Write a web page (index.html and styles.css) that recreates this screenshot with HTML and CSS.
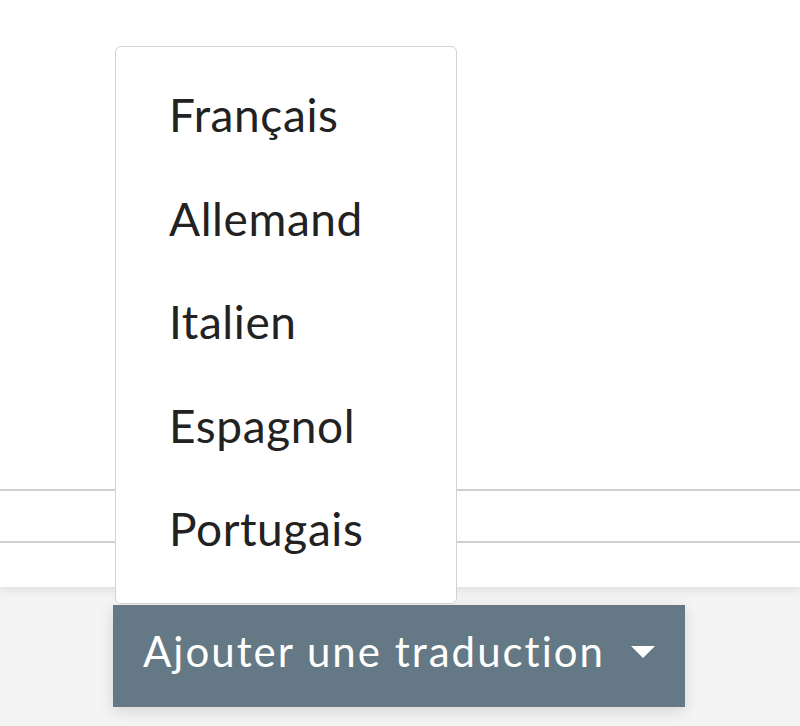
FILE: index.html
```html
<!DOCTYPE html>
<html lang="fr">
<head>
<meta charset="utf-8">
<title>Ajouter une traduction</title>
<link rel="stylesheet" href="styles.css">
</head>
<body>
<div class="page">
  <section class="content">
    <div class="row row-first"></div>
    <div class="row"></div>
    <div class="row row-last"></div>
  </section>
  <footer class="footer">
    <div class="dropdown">
      <ul class="menu">
        <li class="menu-item">Français</li>
        <li class="menu-item">Allemand</li>
        <li class="menu-item">Italien</li>
        <li class="menu-item">Espagnol</li>
        <li class="menu-item">Portugais</li>
      </ul>
      <button class="btn" type="button">Ajouter une traduction<span class="caret"></span></button>
    </div>
  </footer>
</div>
</body>
</html>
```
FILE: styles.css
```css
html, body {
  margin: 0;
  padding: 0;
  background: #f4f4f4;
}
body {
  font-family: Lato, "Noto Sans", sans-serif;
  color: #222;
}
.page {
  width: 800px;
  height: 726px;
  overflow: hidden;
  display: flex;
  flex-direction: column;
}
.content {
  height: 587px;
  background: #fff;
  box-shadow: 0 3px 10px rgba(0, 0, 0, 0.09);
  position: relative;
  z-index: 1;
  display: flex;
  flex-direction: column;
}
.row {
  height: 50px;
  border-bottom: 2px solid #cfcfcf;
}
.row-first {
  height: 489px;
}
.row-last {
  flex: 1;
  border-bottom: 0;
}
.footer {
  flex: 1;
  background: #f4f4f4;
  padding: 18px 0 0 113px;
}
.dropdown {
  position: relative;
  display: inline-block;
  z-index: 2;
}
.menu {
  position: absolute;
  left: 2px;
  bottom: 102px;
  width: 342px;
  height: 558px;
  box-sizing: border-box;
  margin: 0 0 1px;
  padding: 16px 0 0;
  list-style: none;
  background: #fff;
  border: 1.5px solid #d2d2d2;
  border-radius: 6px;
}
.menu-item {
  height: 103.5px;
  line-height: 103.5px;
  padding-left: 53px;
  font-size: 46px;
  letter-spacing: 0.6px;
  color: #222;
}
.btn {
  display: flex;
  align-items: center;
  height: 102px;
  width: 572px;
  box-sizing: border-box;
  padding: 0 30px 10px 30px;
  border: 0;
  background: #647885;
  color: #fff;
  font-family: Lato, "Noto Sans", sans-serif;
  font-size: 42px;
  letter-spacing: 2px;
  line-height: 92px;
  box-shadow: 0 4px 14px rgba(0, 0, 0, 0.13);
  cursor: pointer;
}
.caret {
  width: 0;
  height: 0;
  margin-left: auto;
  margin-top: 2px;
  border-left: 12px solid transparent;
  border-right: 12px solid transparent;
  border-top: 12px solid #fff;
}
```
